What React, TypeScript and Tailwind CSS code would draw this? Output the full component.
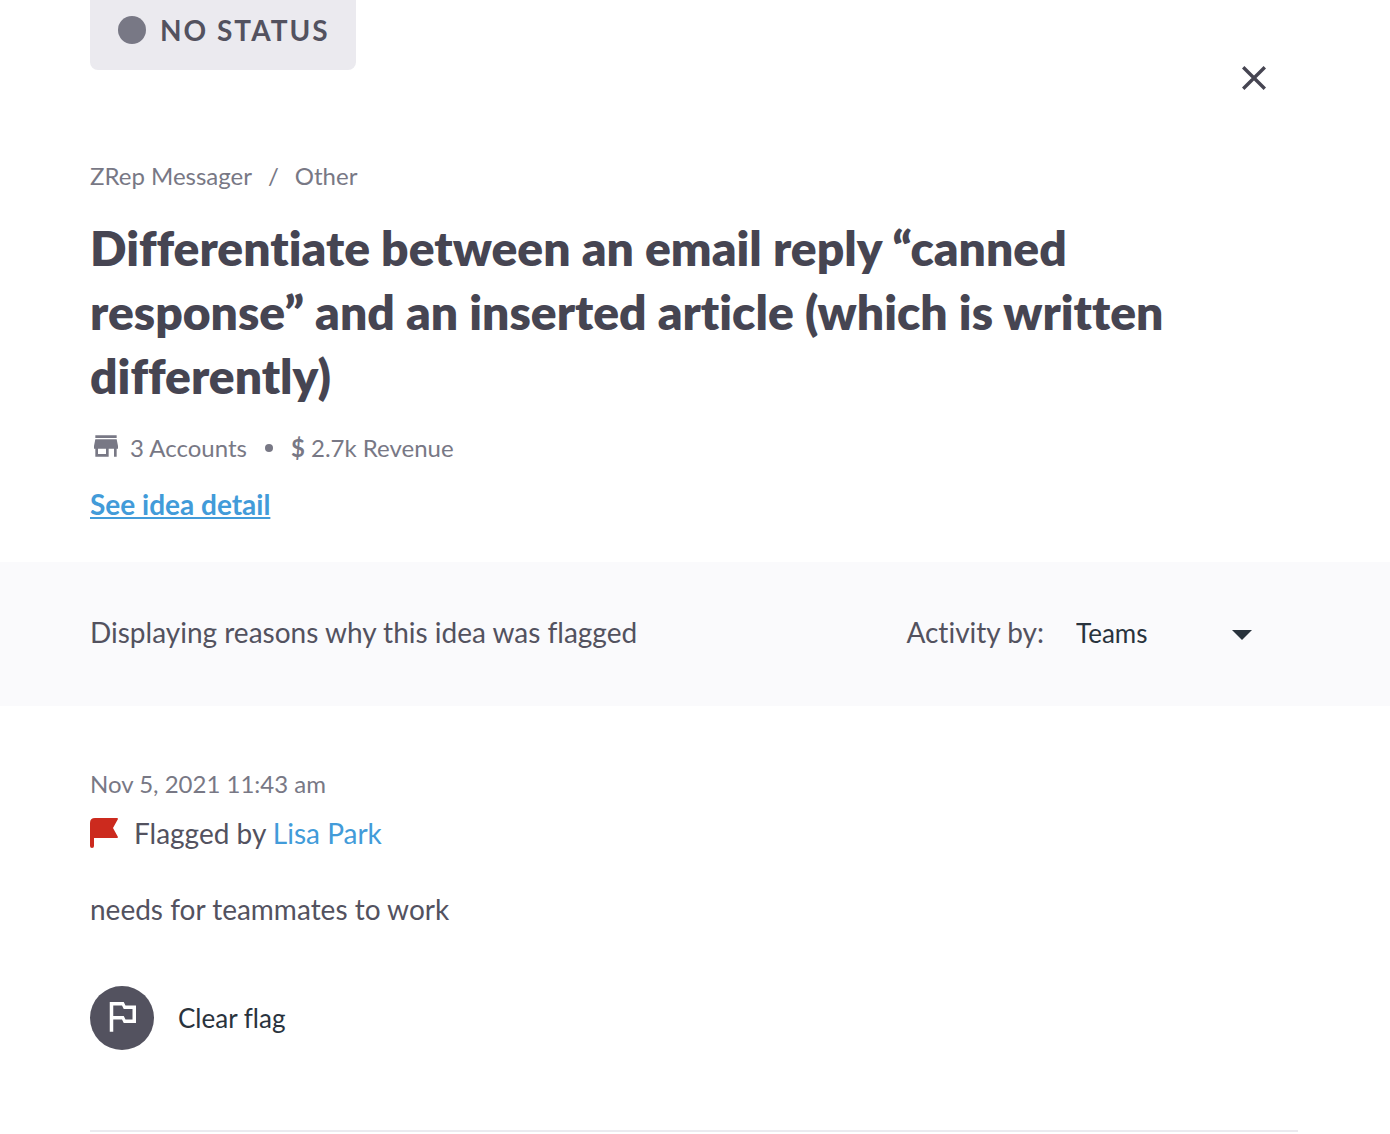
import React from "react";
import { MdOutlinedFlag, MdStore } from "react-icons/md";

function StatusBadge() {
  return (
    <div className="flex h-[70px] w-[266px] items-center gap-3.5 rounded-b-lg bg-[#ebeaef] pb-2.5 pl-7">
      <span className="h-7 w-7 shrink-0 rounded-full bg-[#787885]" />
      <span className="text-[28px] leading-9 font-bold tracking-[2px] whitespace-nowrap text-[#53525f]">NO STATUS</span>
    </div>
  );
}

function CloseButton() {
  return (
    <button type="button" aria-label="Close" className="mt-[66px] mr-8 h-6 w-6 text-[#464552]">
      <svg viewBox="0 0 24 24" className="h-6 w-6" fill="none" stroke="currentColor" strokeWidth="3.4">
        <path d="M1.2 1.2 22.8 22.8M22.8 1.2 1.2 22.8" />
      </svg>
    </button>
  );
}

function RedFlag() {
  return (
    <svg viewBox="0 0 28 30" className="h-[30px] w-7 shrink-0" fill="#cc2a1e" aria-hidden="true">
      <path d="M5 0H26.8Q28.6 0 27.7 1.6L23 10L27.7 18.4Q28.6 20 26.8 20H4V28A2 2 0 0 1 0 28V5Q0 0 5 0Z" />
    </svg>
  );
}

function IdeaHeader() {
  return (
    <header className="pr-[92px] pl-[90px]">
      <div className="flex items-start justify-between">
        <StatusBadge />
        <CloseButton />
      </div>
      <nav aria-label="Breadcrumb" className="mt-[70px] flex gap-4 text-2xl text-[#787885]">
        <span>ZRep Messager</span>
        <span>/</span>
        <span>Other</span>
      </nav>
      <h1 className="mt-6 max-w-[1120px] text-5xl leading-[64px] font-extrabold text-[#464552]">
        Differentiate between an email reply “canned response” and an inserted article (which is written differently)
      </h1>
      <div className="mt-[22px] flex items-center text-2xl text-[#787885]">
        <MdStore className="mr-2 mb-1 h-8 w-8" aria-hidden="true" />
        <span>3 Accounts</span>
        <span className="mx-[18px] h-2 w-2 rounded-full bg-[#787885]" />
        <span>
          <b>$</b> 2.7k Revenue
        </span>
      </div>
      <a
        href="#detail"
        className="mt-5 inline-block text-[28px] leading-9 font-bold text-[#429bd9] underline decoration-2 underline-offset-2"
      >
        See idea detail
      </a>
    </header>
  );
}

function ActivityBar() {
  return (
    <div className="mt-10 flex h-36 items-center justify-between bg-[#fafafc] pr-[138px] pb-1 pl-[90px] text-[28px] leading-9 text-[#53525f]">
      <p>Displaying reasons why this idea was flagged</p>
      <div className="flex items-center gap-8">
        <label htmlFor="activity">Activity by:</label>
        <div className="relative">
          <select id="activity" className="w-44 appearance-none bg-transparent text-[26px] leading-9 text-[#29333d]">
            <option>Teams</option>
          </select>
          <svg
            viewBox="0 0 20 10"
            className="pointer-events-none absolute top-4 right-0 h-2.5 w-5"
            fill="#29333d"
            aria-hidden="true"
          >
            <path d="M0 0H20L10 10Z" />
          </svg>
        </div>
      </div>
    </div>
  );
}

function FlagEntry() {
  return (
    <article className="mr-[92px] ml-[90px] border-b-2 border-[#ebeaef] pt-[62px] pb-20 text-[28px] leading-9 text-[#53525f]">
      <time dateTime="2021-11-05T11:43" className="block text-2xl text-[#787885]">
        Nov 5, 2021 11:43 am
      </time>
      <div className="mt-[15px] flex items-center gap-4">
        <RedFlag />
        <p>
          Flagged by{" "}
          <a href="#lisa-park" className="text-[#429bd9]">
            Lisa Park
          </a>
        </p>
      </div>
      <p className="mt-10">needs for teammates to work</p>
      <button type="button" className="mt-[59px] flex items-center gap-6 text-[26px] text-[#29333d]">
        <span className="flex h-16 w-16 items-center justify-center rounded-full bg-[#53525f] pb-1 text-white">
          <MdOutlinedFlag className="h-[42px] w-[42px]" aria-hidden="true" />
        </span>
        Clear flag
      </button>
    </article>
  );
}

export default function App() {
  return (
    <main className="bg-white font-['Lato',sans-serif] [font-variant-ligatures:none]">
      <IdeaHeader />
      <ActivityBar />
      <FlagEntry />
    </main>
  );
}
